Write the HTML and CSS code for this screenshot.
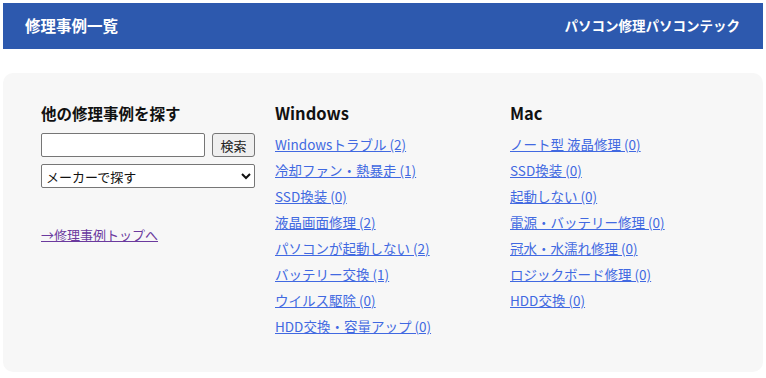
FILE: index.html
```html
<!DOCTYPE html>
<html lang="ja">
<head>
  <meta charset="UTF-8" />
  <meta name="viewport" content="width=device-width, initial-scale=1.0"/>
  <title>修理事例一覧</title>
  <link rel="stylesheet" href="styles.css">
</head>
<body>

  <!-- HEADER -->
  <header class="header">
    <h1>修理事例一覧</h1>
    <p class="brand">パソコン修理パソコンテック</p>
  </header>

  <!-- CASE LIST -->
  <section class="cases">
    <div class="col">
      <h2>他の修理事例を探す</h2>
      <form class="search">
        <div class="search-row">
          <input type="text" class="search-input" />
          <button type="button" class="search-btn">検索</button>
        </div>
        <select class="maker">
          <option>メーカーで探す</option>
        </select>
      </form>
      <a href="#" class="top-link">→修理事例トップへ</a>
    </div>

    <div class="col">
      <h2 class="os">Windows</h2>
      <ul>
        <li><a href="#">Windowsトラブル (2)</a></li>
        <li><a href="#">冷却ファン・熱暴走 (1)</a></li>
        <li><a href="#">SSD換装 (0)</a></li>
        <li><a href="#">液晶画面修理 (2)</a></li>
        <li><a href="#">パソコンが起動しない (2)</a></li>
        <li><a href="#">バッテリー交換 (1)</a></li>
        <li><a href="#">ウイルス駆除 (0)</a></li>
        <li><a href="#">HDD交換・容量アップ (0)</a></li>
      </ul>
    </div>

    <div class="col">
      <h2 class="os">Mac</h2>
      <ul>
        <li><a href="#">ノート型 液晶修理 (0)</a></li>
        <li><a href="#">SSD換装 (0)</a></li>
        <li><a href="#">起動しない (0)</a></li>
        <li><a href="#">電源・バッテリー修理 (0)</a></li>
        <li><a href="#">冠水・水濡れ修理 (0)</a></li>
        <li><a href="#">ロジックボード修理 (0)</a></li>
        <li><a href="#">HDD交換 (0)</a></li>
      </ul>
    </div>
  </section>

</body>
</html>
```

FILE: styles.css
```css
* {
  box-sizing: border-box;
  margin: 0;
  padding: 0;
}

body {
  margin: 3px;
  font-family: "Noto Sans CJK JP", "Noto Sans", sans-serif;
  color: #111;
  background: #fff;
}

.header {
  display: flex;
  justify-content: space-between;
  align-items: center;
  height: 46px;
  padding: 0 23px 0 22px;
  background-color: #2d59ae;
  color: white;
}

.header h1 {
  font-size: 15.5px;
  font-weight: 700;
  margin-top: -3px;
}

.brand {
  font-size: 13.5px;
  font-weight: 700;
  margin-top: -3px;
}

.cases {
  display: grid;
  grid-template-columns: 234px 235px 1fr;
  margin-top: 24px;
  height: 299px;
  padding: 29px 20px 0 38px;
  background: #f7f7f7;
  border-radius: 10px;
}

.cases h2 {
  font-size: 15.5px;
  font-weight: 700;
  line-height: 22px;
  margin-bottom: 9px;
}

.cases h2.os {
  font-size: 16.5px;
}

.search-row {
  display: flex;
  gap: 7px;
  margin-bottom: 7px;
}

.search-input {
  width: 164px;
  height: 24px;
  border: 1px solid #767676;
  border-radius: 2px;
  background: white;
}

.search-btn {
  width: 43px;
  height: 24px;
  font-family: inherit;
  font-size: 13px;
  color: #222;
  background: #efefef;
  border: 1px solid #767676;
  border-radius: 3px;
}

.maker {
  display: block;
  width: 214px;
  height: 24px;
  font-family: inherit;
  font-size: 13px;
  color: #111;
  background: white;
  border: 1px solid #767676;
  border-radius: 2px;
}

.top-link {
  display: block;
  margin-top: 37px;
  font-size: 13px;
  color: #6b3a9e;
}

ul {
  list-style: none;
  padding-top: 1px;
}

ul li {
  height: 26px;
  font-size: 13.5px;
  line-height: 20px;
}

ul li a {
  color: #4169e1;
}
```
